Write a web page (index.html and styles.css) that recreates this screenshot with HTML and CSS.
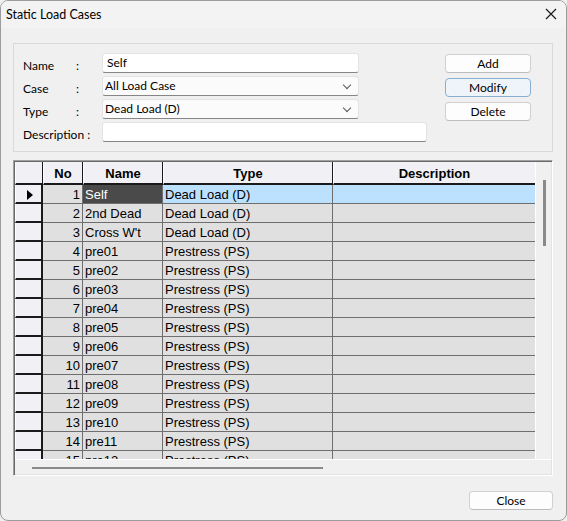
FILE: index.html
```html
<!DOCTYPE html>
<html>
    <head>
        <title>Static Load Cases</title>
        <link rel="stylesheet" href="styles.css">
    </head>
    <body>
        <div class="window">
            <div class="titlebar">
                <span class="title">Static Load Cases</span>
                <svg class="close-x" width="12" height="12" viewBox="0 0 12 12">
                    <path d="M1 1 L11 11 M11 1 L1 11" stroke="#1a1a1a" stroke-width="1.2"/>
                </svg>
            </div>
            <div class="content">
                <div class="group">
                    <div class="fields">
                        <div class="row">
                            <span class="lbl">Name</span><span class="colon">:</span>
                            <div class="input">Self</div>
                        </div>
                        <div class="row">
                            <span class="lbl">Case</span><span class="colon">:</span>
                            <div class="combo">All Load Case<span class="chev"></span></div>
                        </div>
                        <div class="row">
                            <span class="lbl">Type</span><span class="colon">:</span>
                            <div class="combo">Dead Load (D)<span class="chev"></span></div>
                        </div>
                        <div class="row">
                            <span class="lbl wide">Description :</span>
                            <div class="input long"></div>
                        </div>
                    </div>
                    <div class="buttons">
                        <button class="btn">Add</button>
                        <button class="btn focus">Modify</button>
                        <button class="btn">Delete</button>
                    </div>
                </div>

                <div class="grid">
                    <div class="grid-main">
                        <div class="table-wrap">
                            <table>
                                <thead>
                                    <tr>
                                        <th class="c-rh"></th>
                                        <th class="c-no">No</th>
                                        <th class="c-name">Name</th>
                                        <th class="c-type">Type</th>
                                        <th class="c-desc">Description</th>
                                    </tr>
                                </thead>
                                <tbody id="rows"></tbody>
                            </table>
                        </div>
                        <div class="vscroll"><div class="vthumb"></div></div>
                    </div>
                    <div class="hscroll"><div class="hthumb"></div></div>
                </div>

                <div class="footer">
                    <button class="btn close">Close</button>
                </div>
            </div>
        </div>
        <script>
            var cases = [
                ['Self', 'Dead Load (D)'],
                ['2nd Dead', 'Dead Load (D)'],
                ['Cross W\'t', 'Dead Load (D)']
            ];
            for(var i = 1; i <= 12; i++){
                cases.push(['pre' + (i < 10 ? '0' + i : i), 'Prestress (PS)']);
            }
            var body = document.getElementById("rows");
            cases.forEach(function(c, idx){
                var tr = document.createElement("tr");
                if(idx === 0) tr.className = "sel";
                tr.innerHTML =
                    '<td class="rh">' + (idx === 0 ? '<span class="arrow"></span>' : '') + '</td>' +
                    '<td class="no">' + (idx + 1) + '</td>' +
                    '<td class="name">' + c[0] + '</td>' +
                    '<td class="type">' + c[1] + '</td>' +
                    '<td class="desc"></td>';
                body.appendChild(tr);
            });
        </script>
    </body>
</html>
```

FILE: styles.css
```css
body{
    margin: 0;
    background-color: #f0f0f0;
    font-family: Lato, "Noto Sans", sans-serif;
    font-size: 12px;
    color: #000;
}
.window{
    width: 565px;
    height: 519px;
    border: 1px solid #9c9c9c;
    border-radius: 8px;
    background-color: #f0f0f0;
    overflow: hidden;
}
.titlebar{
    height: 27px;
    background-color: #f3f3f3;
    display: flex;
    align-items: center;
    padding-left: 5px;
    padding-right: 9px;
}
.title{
    flex: 1;
    font-size: 12.5px;
    padding-bottom: 1px;
}
.close-x{
    margin-bottom: 1px;
}
.content{
    padding: 15px 13px 0 12px;
}

/* top form */
.group{
    height: 109px;
    box-sizing: border-box;
    border: 1px solid #d9d9d9;
    display: flex;
    padding: 9px 21px 0 9px;
}
.fields{
    display: flex;
    flex-direction: column;
    gap: 3px;
}
.row{
    display: flex;
    align-items: center;
    height: 20px;
}
.lbl{
    width: 53px;
    padding-top: 4px;
}
.colon{
    width: 26px;
    padding-top: 4px;
}
.lbl.wide{
    width: 79px;
}
.input, .combo{
    width: 257px;
    height: 20px;
    box-sizing: border-box;
    border: 1px solid #e3e3e3;
    border-bottom-color: #868686;
    border-radius: 3px;
    background-color: #fff;
    padding-left: 4px;
    line-height: 18px;
}
.input.long{
    width: 325px;
}
.combo{
    background-color: #fbfbfb;
    padding-left: 2px;
    position: relative;
}
.chev{
    position: absolute;
    right: 8px;
    top: 5px;
    width: 5px;
    height: 5px;
    border-right: 1px solid #555;
    border-bottom: 1px solid #555;
    transform: rotate(45deg);
}
.buttons{
    margin-left: auto;
    display: flex;
    flex-direction: column;
    gap: 5px;
    padding-top: 1px;
}
.btn{
    width: 86px;
    height: 19px;
    padding: 0;
    font-family: Lato, "Noto Sans", sans-serif;
    font-size: 12px;
    color: #000;
    background-color: #fdfdfd;
    border: 1px solid #d0d0d0;
    border-bottom-color: #bdbdbd;
    border-radius: 4px;
}
.btn.focus{
    background-color: #eef4fa;
    border-color: #88aed3;
}

/* grid */
.grid{
    margin-top: 8px;
    height: 316px;
    box-sizing: border-box;
    border-top: 1px solid #a0a0a0;
    border-left: 1px solid #a0a0a0;
    border-right: 1px solid #fff;
    border-bottom: 1px solid #fff;
    box-shadow: inset 1px 1px 0 #696969, inset -1px -1px 0 #e3e3e3;
    padding: 1px;
    display: flex;
    flex-direction: column;
}
.grid-main{
    display: flex;
    height: 297px;
}
.table-wrap{
    width: 520px;
    height: 297px;
    overflow: hidden;
    background-color: #fff;
}
.vscroll{
    flex: 1;
    background-color: #f0f0f0;
    border-left: 1px solid #fff;
    position: relative;
}
.vthumb{
    position: absolute;
    left: 7px;
    top: 18px;
    width: 3px;
    height: 66px;
    background-color: #8a8a8a;
}
.hscroll{
    flex: 1;
    background-color: #f0f0f0;
    border-top: 1px solid #fff;
    position: relative;
}
.hthumb{
    position: absolute;
    left: 17px;
    top: 7px;
    width: 291px;
    height: 2px;
    background-color: #8a8a8a;
}
table{
    table-layout: fixed;
    border-collapse: separate;
    border-spacing: 0;
    width: 520px;
    font-family: "Liberation Sans", Arial, sans-serif;
    font-size: 13px;
}
th, td{
    box-sizing: border-box;
    padding: 0 3px;
    white-space: nowrap;
    overflow: hidden;
}
th{
    height: 23px;
    background-color: #f0f0f5;
    border-right: 1px solid #1a1a1a;
    border-bottom: 2px solid #1a1a1a;
    border-left: 1px solid #fff;
    font-weight: bold;
    text-align: center;
    padding-top: 2px;
}
th.c-desc{
    border-right: 0;
}
.c-rh{ width: 28px; }
.c-no{ width: 40px; }
.c-name{ width: 80px; }
.c-type{ width: 170px; }
.c-desc{ width: 202px; }
td{
    height: 19px;
    line-height: 17px;
    padding-top: 1px;
    background-color: #e0e0e0;
    border-right: 1px solid #6e6e6e;
    border-bottom: 1px solid #6e6e6e;
}
td.desc{
    border-right: 0;
}
td.rh{
    background-color: #f0f0f5;
    border-left: 1px solid #fff;
    border-right: 2px solid #1a1a1a;
    border-bottom: 2px solid #1a1a1a;
    text-align: center;
    padding: 0;
}
td.no{
    text-align: right;
    padding-right: 2px;
}
td.name, td.type{
    padding-left: 2px;
}
.sel td.name{
    background-color: #4a4a4a;
    color: #fff;
}
.sel td.type, .sel td.desc{
    background-color: #bbe1ff;
}
.arrow{
    display: inline-block;
    width: 0;
    height: 0;
    border-left: 6px solid #000;
    border-top: 5px solid transparent;
    border-bottom: 5px solid transparent;
    vertical-align: middle;
    margin-left: 2px;
}

.footer{
    display: flex;
    justify-content: flex-end;
    margin-top: 15px;
}
.btn.close{
    width: 84px;
    height: 19px;
}
```
